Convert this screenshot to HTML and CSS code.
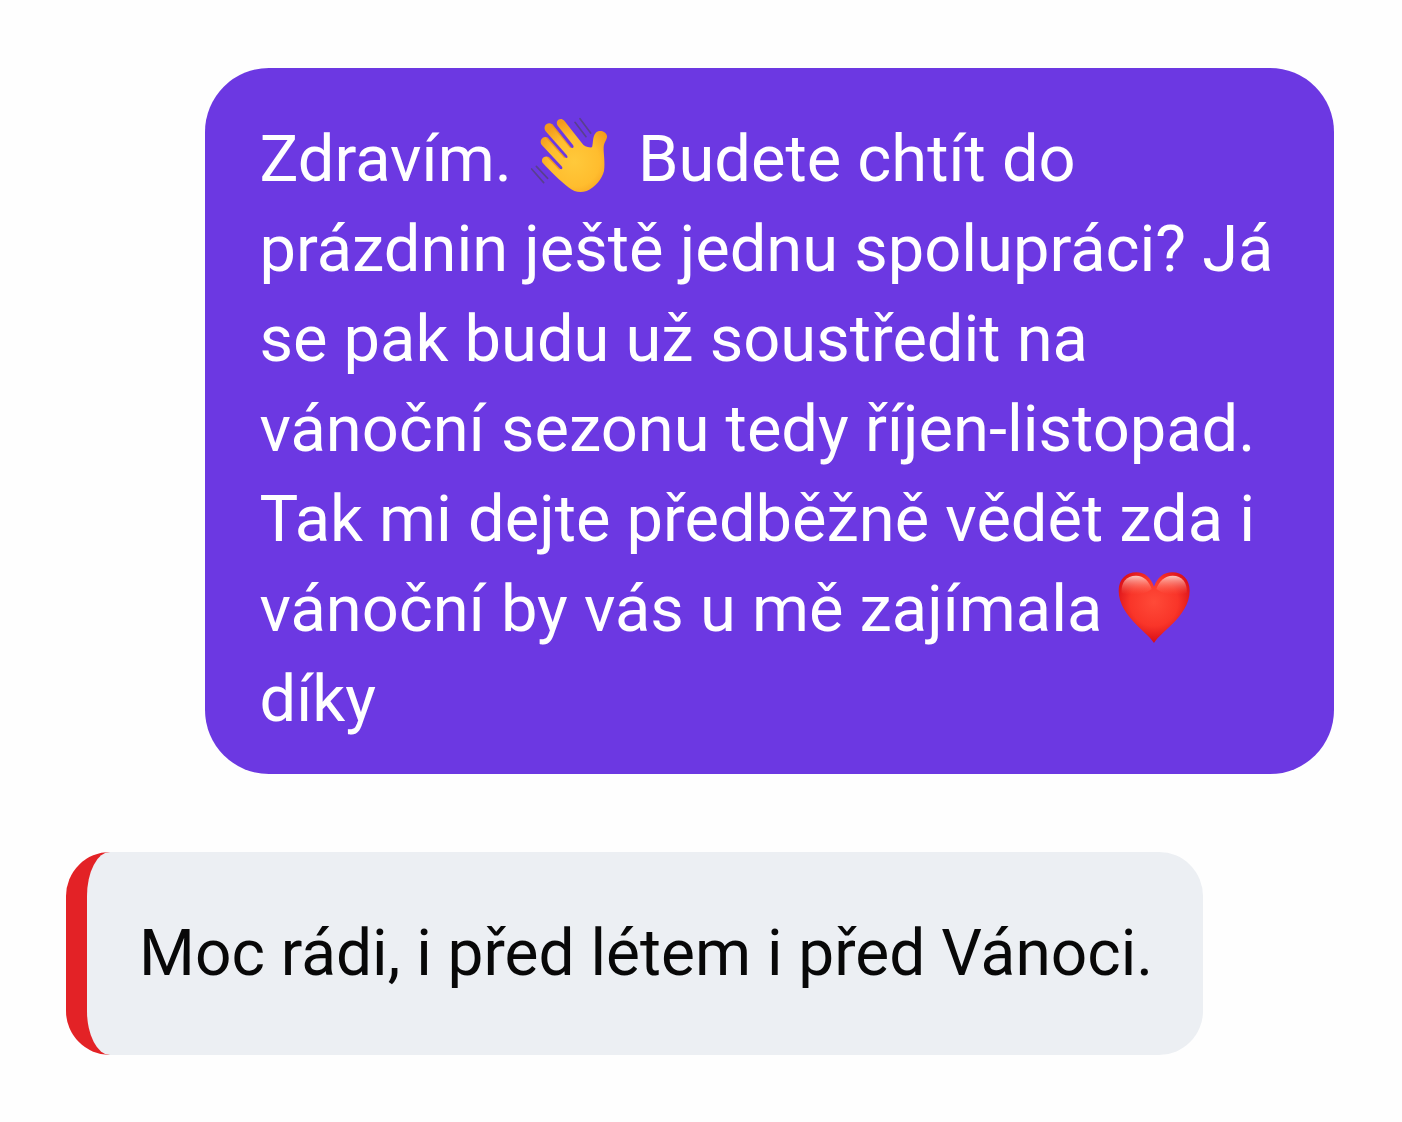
FILE: index.html
```html
<!DOCTYPE html>
<html lang="cs">
<head>
    <meta charset="UTF-8">
    <meta name="viewport" content="width=device-width, initial-scale=1.0">
    <title>Zprávy</title>
    <link rel="stylesheet" href="styles.css">
</head>
<body>
    <main class="chat">
        <p class="message sent">
            Zdravím.
            <svg class="emoji wave" viewBox="62 45 234 240" role="img" aria-label="mávající ruka">
                <defs>
                    <radialGradient id="skin" gradientUnits="userSpaceOnUse" cx="195" cy="185" r="125">
                        <stop offset="0" stop-color="#ffc93b"/>
                        <stop offset="0.6" stop-color="#ffbd2e"/>
                        <stop offset="1" stop-color="#f39a1c"/>
                    </radialGradient>
                </defs>
                <path class="motion" d="M197 67l33 43M212 56l32 43M67 207l36 41M81 199l34 36"/>
                <path fill="url(#skin)" d="M101 190C92 178 104 164 118 171L150 205C156 211 163 206 157 199L98 136C87 122 101 105 115 113L166 171C173 177 178 172 172 165L109 94C99 79 114 63 129 73L183 141C190 147 196 142 191 135L145 77C136 62 153 50 165 62L218 130C224 139 233 143 248 142C252 128 249 111 259 99C268 88 290 93 293 108C294 118 284 126 283 142C282 160 288 187 284 213C278 238 257 262 232 273C211 280 194 275 179 263C152 243 122 212 101 190Z"/>
                <path class="crease" d="M116 172l34 35M113 114l52 58M127 74l56 68"/>
            </svg>
            Budete chtít do<br>
            prázdnin ještě jednu spolupráci? Já<br>
            se pak budu už soustředit na<br>
            vánoční sezonu tedy říjen-listopad.<br>
            Tak mi dejte předběžně vědět zda i<br>
            vánoční by vás u mě zajímala
            <svg class="emoji heart" viewBox="40 32 216 219" role="img" aria-label="srdce">
                <defs>
                    <radialGradient id="red" gradientUnits="userSpaceOnUse" cx="148" cy="125" r="120">
                        <stop offset="0" stop-color="#ff4a38"/>
                        <stop offset="0.6" stop-color="#f93529"/>
                        <stop offset="1" stop-color="#d90f18"/>
                    </radialGradient>
                    <linearGradient id="shine" x1="0" y1="0" x2="0" y2="1">
                        <stop offset="0" stop-color="#ffd9d0" stop-opacity="0.9"/>
                        <stop offset="1" stop-color="#ff6a55" stop-opacity="0"/>
                    </linearGradient>
                </defs>
                <path fill="url(#red)" d="M148 248C137 231 118 216 99 197C65 162 42 130 42 91C42 57 65 36 95 36C120 36 138 51 148 79C158 51 177 36 203 36C233 36 255 57 255 91C255 130 231 164 199 195C178 216 160 230 148 248Z"/>
                <path fill="url(#shine)" d="M51 98C48 66 65 46 94 46C118 46 133 63 141 86C120 103 83 107 51 98Z"/>
                <path fill="url(#shine)" d="M155 86C163 63 180 46 204 46C232 46 249 66 246 98C214 107 177 103 155 86Z"/>
            </svg><br>
            díky
        </p>
        <p class="message received">Moc rádi, i před létem i před Vánoci.</p>
    </main>
</body>
</html>
```

FILE: styles.css
```css
* {
    box-sizing: border-box;
}

body {
    margin: 0;
    background-color: #fefefe;
    font-family: Roboto, sans-serif;
    font-size: 65px;
    line-height: 90px;
}

.chat {
    display: flex;
    flex-direction: column;
    gap: 78px;
    padding: 68px 68px 66px 66px;
}

.message {
    margin: 0;
}

.sent {
    align-self: flex-end;
    width: 89%;
    padding: 46px 40px 30px 54px;
    border-radius: 64px;
    background-color: #6c38e2;
    color: #fff;
}

.received {
    align-self: flex-start;
    padding: 57px 50px 56px 52px;
    border-left: 21px solid #e32226;
    border-radius: 44px;
    background-color: #eceff3;
    color: #080808;
    font-size: 64px;
}

.emoji {
    overflow: visible;
}

.wave {
    width: 78px;
    height: 80px;
    margin: -20px 14px 0 2px;
    vertical-align: -14px;
}

.heart {
    width: 72px;
    height: 73px;
    vertical-align: -13px;
}

.motion {
    fill: none;
    stroke: #59408f;
    stroke-width: 5;
    stroke-linecap: round;
}

.crease {
    fill: none;
    stroke: #e98a1d;
    stroke-width: 4;
    stroke-linecap: round;
    opacity: 0.7;
}
```
